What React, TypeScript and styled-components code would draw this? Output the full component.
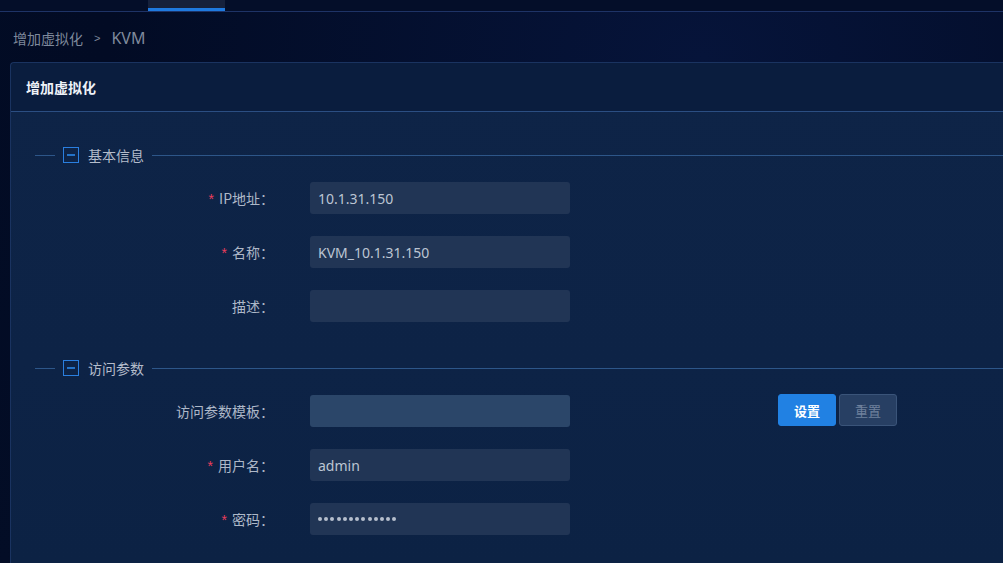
import React from "react";
import styled, { createGlobalStyle } from "styled-components";

const Global = createGlobalStyle`
  html, body { margin: 0; padding: 0; }
  body {
    background: #030d26;
    font-family: "Noto Sans CJK SC", "Noto Sans", sans-serif;
    overflow: hidden;
  }
`;

const Page = styled.div`
  width: 1003px;
  height: 563px;
  background: radial-gradient(ellipse at 70% 10%, #06143a 0%, #020b24 60%, #030d26 100%);
  display: flex;
  flex-direction: column;
  overflow: hidden;
`;

const TopBar = styled.div`
  height: 11px;
  flex: 0 0 11px;
  border-bottom: 1px solid #1e3366;
  background: #040e29;
  display: flex;
  padding-left: 148px;
`;

const Tab = styled.div`
  width: 77px;
  height: 8px;
  background: #16213c;
  border-bottom: 3px solid #1f7ae0;
`;

const Breadcrumb = styled.div`
  height: 50px;
  flex: 0 0 50px;
  display: flex;
  align-items: center;
  padding: 2px 0 0 13px;
  box-sizing: border-box;
  font-size: 14px;
  color: #7f899c;
  gap: 11px;
`;

const Sep = styled.span`
  font-size: 11px;
  color: #7f899c;
  font-family: "Liberation Sans", sans-serif;
`;

const Kvm = styled.span`
  font-family: "Noto Sans", sans-serif;
  font-size: 16px;
`;

const Panel = styled.div`
  margin-left: 10px;
  flex: 1;
  border: 1px solid #1a3360;
  border-right: none;
  border-bottom: none;
  border-radius: 4px 0 0 0;
  background: linear-gradient(180deg, #0e2447 0%, #0d2346 60%, #0c2244 100%);
  display: flex;
  flex-direction: column;
`;

const PanelHeader = styled.div`
  height: 48px;
  flex: 0 0 48px;
  display: flex;
  align-items: center;
  padding-left: 15px;
  background: #0a1d3e;
  border-bottom: 1px solid #2b4e82;
  border-radius: 4px 0 0 0;
  font-size: 14px;
  font-weight: 700;
  color: #eef2f8;
`;

const PanelBody = styled.div`
  padding: 33px 0 0 24px;
  display: flex;
  flex-direction: column;
`;

const SectionHead = styled.div`
  height: 20px;
  display: flex;
  align-items: center;
`;

const LineShort = styled.div`
  width: 20px;
  height: 1px;
  background: #2d5689;
  margin-right: 8px;
`;

const LineLong = styled.div`
  flex: 1;
  height: 1px;
  background: #2d5689;
  margin-left: 8px;
`;

const Toggle = styled.div`
  width: 14px;
  height: 14px;
  border: 1px solid #2a7fe0;
  display: flex;
  align-items: center;
  justify-content: center;
  margin-right: 9px;
  &::after {
    content: "";
    width: 8px;
    height: 2px;
    background: #2473c8;
  }
`;

const SectionTitle = styled.span`
  font-size: 14px;
  color: #b4bccb;
`;

const Rows = styled.div<{ $mb: number }>`
  display: flex;
  flex-direction: column;
  gap: 22px;
  padding-top: 17px;
  margin-bottom: ${(p) => p.$mb}px;
`;

const Row = styled.div`
  display: flex;
  align-items: center;
  height: 32px;
`;

const Label = styled.label`
  width: 239px;
  flex: 0 0 239px;
  text-align: right;
  font-size: 14px;
  color: #aeb8c8;
  margin-right: 36px;
  white-space: nowrap;
`;

const Star = styled.span`
  color: #ea3e5c;
  margin-right: 5px;
  font-family: "Liberation Sans", sans-serif;
  font-size: 14px;
`;

const Input = styled.input<{ $light?: boolean }>`
  width: 260px;
  height: 32px;
  box-sizing: border-box;
  border: none;
  outline: none;
  border-radius: 3px;
  background: ${(p) => (p.$light ? "#2b4669" : "#213555")};
  padding: 0 8px;
  font-family: "Noto Sans", sans-serif;
  font-size: 14px;
  color: #bcc5d3;
`;

const Dots = styled.div`
  width: 260px;
  height: 32px;
  box-sizing: border-box;
  border-radius: 3px;
  background: #213555;
  padding: 0 8px;
  display: flex;
  align-items: center;
  gap: 2.2px;
`;

const Dot = styled.span`
  width: 4px;
  height: 4px;
  border-radius: 50%;
  background: #b6bfcd;
`;

const Buttons = styled.div`
  display: flex;
  gap: 3px;
  margin-left: 208px;
  margin-top: -2px;
`;

const Button = styled.button<{ $primary?: boolean }>`
  width: 58px;
  height: 32px;
  box-sizing: border-box;
  border-radius: 3px;
  border: 1px solid ${(p) => (p.$primary ? "#2181e3" : "#3a5479")};
  background: ${(p) => (p.$primary ? "#2181e3" : "#273f63")};
  color: ${(p) => (p.$primary ? "#ffffff" : "#6f819d")};
  font-family: "Noto Sans CJK SC", sans-serif;
  font-size: 13px;
  font-weight: ${(p) => (p.$primary ? 700 : 400)};
  padding: 0;
  cursor: pointer;
`;

function Section({ title }: { title: string }) {
  return (
    <SectionHead>
      <LineShort />
      <Toggle />
      <SectionTitle>{title}</SectionTitle>
      <LineLong />
    </SectionHead>
  );
}

function FieldLabel({ text, required }: { text: string; required?: boolean }) {
  return (
    <Label>
      {required && <Star>*</Star>}
      {text}：
    </Label>
  );
}

export default function App() {
  return (
    <>
      <Global />
      <Page>
        <TopBar>
          <Tab />
        </TopBar>
        <Breadcrumb>
          <span>增加虚拟化</span>
          <Sep>&gt;</Sep>
          <Kvm>KVM</Kvm>
        </Breadcrumb>
        <Panel>
          <PanelHeader>增加虚拟化</PanelHeader>
          <PanelBody>
            <Section title="基本信息" />
            <Rows $mb={36}>
              <Row>
                <FieldLabel text="IP地址" required />
                <Input readOnly value="10.1.31.150" />
              </Row>
              <Row>
                <FieldLabel text="名称" required />
                <Input readOnly value="KVM_10.1.31.150" />
              </Row>
              <Row>
                <FieldLabel text="描述" />
                <Input readOnly value="" />
              </Row>
            </Rows>
            <Section title="访问参数" />
            <Rows $mb={0}>
              <Row>
                <FieldLabel text="访问参数模板" />
                <Input readOnly value="" $light />
                <Buttons>
                  <Button $primary>设置</Button>
                  <Button>重置</Button>
                </Buttons>
              </Row>
              <Row>
                <FieldLabel text="用户名" required />
                <Input readOnly value="admin" />
              </Row>
              <Row>
                <FieldLabel text="密码" required />
                <Dots>
                  {Array.from({ length: 13 }).map((_, i) => (
                    <Dot key={i} />
                  ))}
                </Dots>
              </Row>
            </Rows>
          </PanelBody>
        </Panel>
      </Page>
    </>
  );
}
